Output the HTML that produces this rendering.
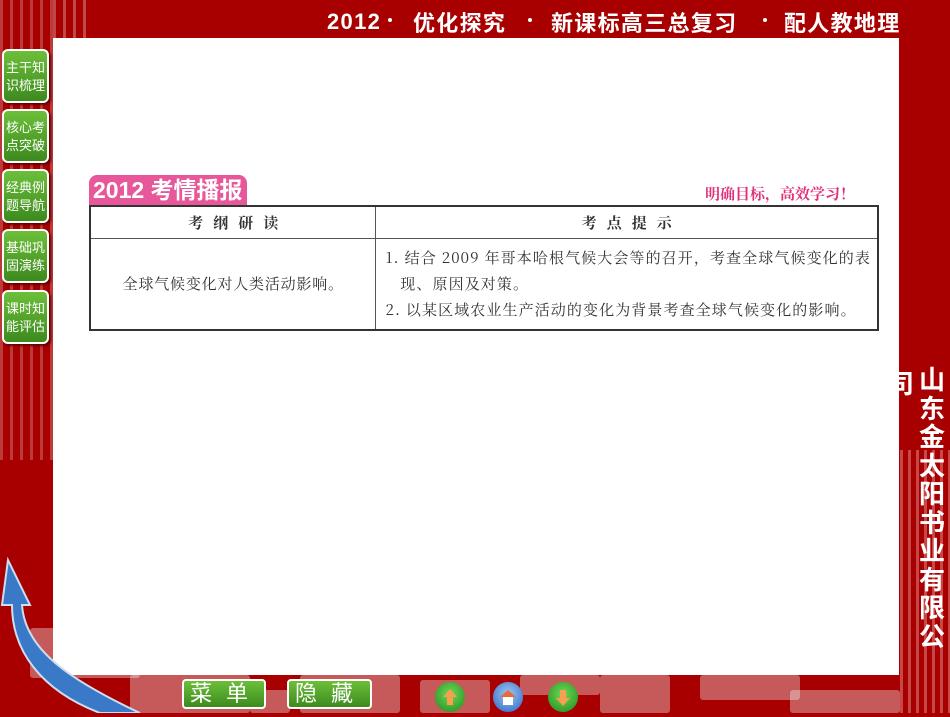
<!DOCTYPE html>
<html><head><meta charset="utf-8">
<style>
*{margin:0;padding:0;box-sizing:border-box}
body{width:950px;height:713px;overflow:hidden;background:#a80000;position:relative;font-family:"Liberation Sans","Noto Sans CJK SC",sans-serif}
.stripes{position:absolute;left:0;top:0;width:53px;height:460px;background:repeating-linear-gradient(90deg,#c04848 0 3px,#a80000 3px 10px);opacity:.8}
.stripes2{position:absolute;left:53px;top:0;width:36px;height:38px;background:repeating-linear-gradient(90deg,#c04848 0 3px,#a80000 3px 10px)}
.panel{position:absolute;left:53px;top:38px;width:846px;height:637px;background:#fff}
.t{position:absolute;top:6px;color:#fff;font-size:22px;font-weight:bold;white-space:nowrap;letter-spacing:1.3px}
.dot{position:absolute;top:18px;width:4px;height:4px;border-radius:50%;background:#fff}
.nav{position:absolute;left:2px;width:47px;height:54px;border:2px solid #fff;border-radius:6px;background:linear-gradient(#6cbf3a,#3d8a1e);color:#fff;font-size:13px;line-height:18px;text-align:center;padding-top:8px;box-shadow:2px 2px 2px #600}
.tab{position:absolute;left:89px;top:175px;width:158px;height:31px;background:#e7589a;border-radius:8px 8px 0 0;color:#fff;font-size:23px;font-weight:bold;padding-left:4px;line-height:31px}
.slogan{position:absolute;left:705px;top:183px;color:#e0307a;font-size:15px;font-weight:bold;font-family:"Noto Serif CJK SC",serif}
table{position:absolute;left:89px;top:205px;width:790px;border-collapse:collapse;font-family:"Noto Serif CJK SC",serif;color:#333;font-size:15px;border:2px solid #333}
td{border:1px solid #555}
.h td{height:32px;text-align:center;font-weight:bold;letter-spacing:10px;padding-left:10px}
.b td{height:92px}
.right{position:absolute;left:917px;top:366px;width:30px;color:#fff;font-size:26px;font-weight:bold;line-height:28.5px;text-align:center}
.rs{position:absolute;left:900px;top:450px;width:50px;height:263px;background:repeating-linear-gradient(90deg,#c84848 0 3px,#a80000 3px 8px)}
.sq{position:absolute;background:rgba(255,255,255,.35);border-radius:3px}
.btn{position:absolute;top:679px;height:30px;border:2px solid #fff;border-radius:4px;background:linear-gradient(#6cbf3a,#3d8a1e);color:#fff;font-size:22px;line-height:26px;letter-spacing:14px;padding-left:6px}
.ci{position:absolute;top:682px;width:30px;height:30px;border-radius:50%}
</style></head><body>
<div class="stripes"></div><div class="stripes2"></div>
<div class="rs"></div>
<div class="sq" style="left:30px;top:628px;width:110px;height:50px"></div>
<div class="sq" style="left:130px;top:675px;width:120px;height:38px"></div>
<div class="sq" style="left:250px;top:690px;width:40px;height:23px"></div>
<div class="sq" style="left:300px;top:675px;width:100px;height:38px"></div>
<div class="sq" style="left:420px;top:680px;width:70px;height:33px"></div>
<div class="sq" style="left:520px;top:675px;width:80px;height:20px"></div>
<div class="sq" style="left:600px;top:675px;width:70px;height:38px"></div>
<div class="sq" style="left:700px;top:675px;width:100px;height:25px"></div>
<div class="sq" style="left:790px;top:690px;width:110px;height:23px"></div>
<div class="panel"></div>
<svg style="position:absolute;left:0;top:530px" width="160" height="183"><path d="M8 30 L2 75 L12 75 C12 120 40 160 100 183 L140 183 C70 150 25 120 22 75 L30 75 Z" fill="#3a78c8" stroke="#cde" stroke-width="2"/></svg>
<div class="t" style="left:327px;top:9px">2012</div>
<div class="dot" style="left:388px"></div>
<div class="t" style="left:413px">优化探究</div>
<div class="dot" style="left:528px"></div>
<div class="t" style="left:551px">新课标高三总复习</div>
<div class="dot" style="left:763px"></div>
<div class="t" style="left:784px">配人教地理</div>
<div class="nav" style="top:49px">主干知<br>识梳理</div>
<div class="nav" style="top:109px">核心考<br>点突破</div>
<div class="nav" style="top:169px">经典例<br>题导航</div>
<div class="nav" style="top:229px">基础巩<br>固演练</div>
<div class="nav" style="top:290px">课时知<br>能评估</div>
<div class="tab">2012 考情播报</div>
<div class="slogan">明确目标，高效学习！</div>
<table>
<tr class="h"><td style="width:291px">考纲研读</td><td>考点提示</td></tr>
<tr class="b"><td style="text-align:center;letter-spacing:0.8px">全球气候变化对人类活动影响。</td>
<td style="padding:4px 6px 4px 9px;line-height:26px;letter-spacing:1.1px;white-space:nowrap">1. 结合 2009 年哥本哈根气候大会等的召开，考查全球气候变化的表<br>&nbsp;&nbsp;&nbsp;现、原因及对策。<br>2. 以某区域农业生产活动的变化为背景考查全球气候变化的影响。</td></tr>
</table>
<div style="position:absolute;left:888px;top:364px;color:#fff;font-size:26px;font-weight:bold">司</div>
<div class="right">山东金太阳书业有限公</div>
<div class="btn" style="left:182px;width:84px">菜单</div>
<div class="btn" style="left:287px;width:85px">隐藏</div>
<div class="ci" style="left:435px;background:radial-gradient(circle at 50% 40%,#6fd85a,#1f8a1a)"><svg width="30" height="30"><path d="M15 7 L22 15 L18 15 L18 23 L12 23 L12 15 L8 15Z" fill="#f9a050"/></svg></div>
<div class="ci" style="left:493px;background:radial-gradient(circle at 50% 40%,#9cc8f5,#2a62c0)"><svg width="30" height="30"><path d="M7 15 L15 8 L23 15Z" fill="#e86a3a"/><rect x="10" y="15" width="10" height="8" fill="#fff"/></svg></div>
<div class="ci" style="left:548px;background:radial-gradient(circle at 50% 40%,#6fd85a,#1f8a1a)"><svg width="30" height="30"><path d="M15 24 L22 16 L18 16 L18 8 L12 8 L12 16 L8 16Z" fill="#f9a050"/></svg></div>
</body></html>
